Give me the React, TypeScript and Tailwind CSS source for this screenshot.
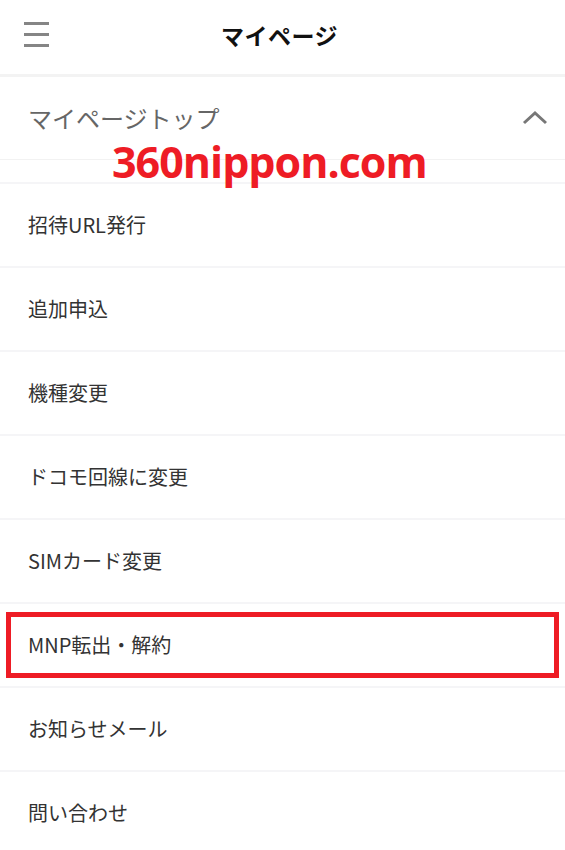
import React from "react";

const items = [
  "招待URL発行",
  "追加申込",
  "機種変更",
  "ドコモ回線に変更",
  "SIMカード変更",
  "MNP転出・解約",
  "お知らせメール",
  "問い合わせ",
];

export default function App() {
  return (
    <div
      className="relative w-[565px] h-[850px] overflow-hidden bg-white"
      style={{ fontFamily: '"Noto Sans CJK JP", "Noto Sans", sans-serif' }}
    >
      {/* header */}
      <div className="relative h-[74px] flex items-center justify-center">
        <div className="absolute left-[24px] top-[22px] flex flex-col gap-[8px]">
          <div className="w-[25px] h-[3px] bg-[#858585]" />
          <div className="w-[25px] h-[3px] bg-[#858585]" />
          <div className="w-[25px] h-[3px] bg-[#858585]" />
        </div>
        <div className="text-[23px] font-bold text-[#111] leading-none -mt-[3px] tracking-[0.5px] -ml-[6px]">マイページ</div>
      </div>
      <div className="h-[3px] bg-[#f3f3f3]" />
      {/* section title */}
      <div className="h-[82px] flex items-center justify-between pl-[28px] pr-[14px]">
        <div className="text-[24px] text-[#666] leading-none">マイページトップ</div>
        <svg width="30" height="20" viewBox="0 0 30 20" className="mr-[1px]">
          <path d="M4 15 L15 5 L26 15" fill="none" stroke="#777" strokeWidth="3" />
        </svg>
      </div>
      <div className="h-[1px] bg-[#f2f2f2]" />
      <div className="h-[22px]" />
      {/* items */}
      <div className="flex flex-col">
        {items.map((t) => (
          <div key={t} className="relative h-[84px] border-t-[2px] border-[#f5f5f7] flex items-center pl-[28px]">
            <span className="text-[20px] text-[#333] leading-none">{t}</span>
            {t === "MNP転出・解約" && (
              <div className="absolute left-[6px] right-[6px] top-[8px] h-[66px] border-[5px] border-[#ee1c25]" />
            )}
          </div>
        ))}
      </div>
      {/* watermark */}
      <div
        className="absolute left-[112px] top-[140px] text-[43px] font-bold text-[#ee1c25] leading-none tracking-[-1px]"
        style={{ fontFamily: '"Open Sans", sans-serif' }}
      >
        360nippon.com
      </div>
    </div>
  );
}
